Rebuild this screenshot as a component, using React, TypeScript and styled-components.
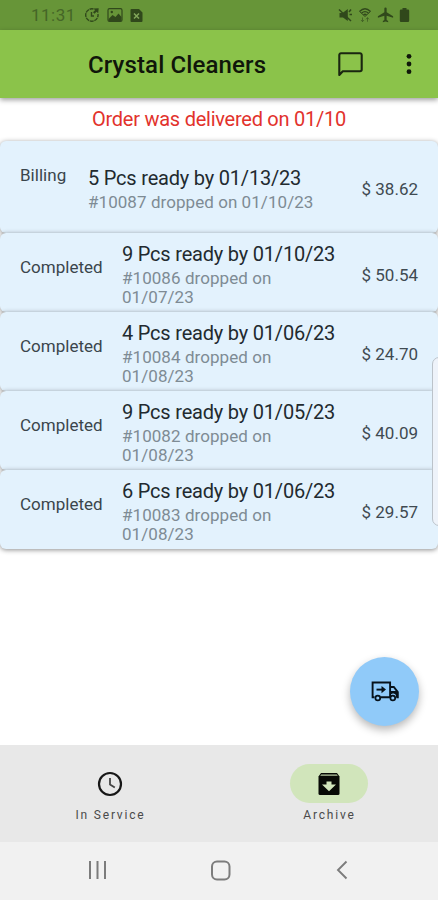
import React from "react";
import styled, { createGlobalStyle } from "styled-components";

const GlobalStyle = createGlobalStyle`
  * { box-sizing: border-box; }
  body { margin: 0; background: #fff; font-family: Roboto, "Liberation Sans", sans-serif; }
`;

const Screen = styled.div`
  position: relative;
  display: flex;
  flex-direction: column;
  width: 438px;
  height: 900px;
  overflow: hidden;
  background: #fff;
`;

const StatusBar = styled.header`
  display: flex;
  align-items: center;
  justify-content: space-between;
  flex: none;
  height: 30px;
  padding: 0 28px 0 31px;
  background: #679538;
  color: #30481b;
`;

const StatusGroup = styled.div<{ $gap: number }>`
  display: flex;
  align-items: center;
  gap: ${(p) => p.$gap}px;
`;

const Clock = styled.span`
  width: 46px;
  font-size: 17px;
  letter-spacing: 0.5px;
  line-height: 20px;
  color: #456627;
`;

const AppBar = styled.div`
  display: flex;
  align-items: center;
  flex: none;
  height: 68px;
  padding: 0 19px 0 88px;
  background: #8bc34a;
  box-shadow: 0 2px 5px rgba(0, 0, 0, 0.38);
  z-index: 1;
`;

const Title = styled.h1`
  flex: 1;
  margin: 1px 0 0;
  font-size: 24px;
  font-weight: 500;
  line-height: 30px;
  letter-spacing: 0.13px;
  white-space: nowrap;
  color: #10160a;
`;

const BarActions = styled.div`
  display: flex;
  align-items: center;
  gap: 36px;
`;

const Notice = styled.p`
  flex: none;
  height: 42px;
  margin: 0;
  text-align: center;
  font-size: 20px;
  line-height: 42px;
  letter-spacing: -0.25px;
  color: #e2322c;
`;

const OrderList = styled.main`
  display: flex;
  flex-direction: column;
  flex: 1;
  padding-top: 1px;
`;

const Card = styled.article<{ $tall?: boolean }>`
  display: flex;
  align-items: flex-start;
  flex: none;
  height: ${(p) => (p.$tall ? 92 : 79)}px;
  padding: ${(p) => (p.$tall ? 24 : 8)}px 20px 0;
  border-radius: 6px;
  background: #e3f2fd;
  box-shadow: 0 1px 5px rgba(0, 0, 0, 0.45);
`;

const OrderState = styled.span<{ $tall?: boolean }>`
  flex: none;
  width: ${(p) => (p.$tall ? 68 : 102)}px;
  margin-top: ${(p) => (p.$tall ? 0 : 16)}px;
  font-size: 17px;
  line-height: 20px;
  letter-spacing: 0.02px;
  color: #3a454c;
`;

const OrderText = styled.div`
  flex: 1;
  min-width: 0;
`;

const Headline = styled.div`
  font-size: 20px;
  line-height: 26px;
  letter-spacing: -0.2px;
  white-space: nowrap;
  color: #222a2f;
`;

const Detail = styled.div<{ $tall?: boolean }>`
  width: ${(p) => (p.$tall ? 240 : 180)}px;
  margin-top: 2px;
  font-size: 17px;
  line-height: 19px;
  letter-spacing: 0.06px;
  color: #7e8b94;
`;

const Price = styled.span<{ $tall?: boolean }>`
  flex: none;
  margin-top: ${(p) => (p.$tall ? 14 : 24)}px;
  font-size: 17px;
  line-height: 20px;
  color: #3f4a51;
`;

const EdgeHandle = styled.div`
  position: absolute;
  top: 357px;
  right: -8px;
  width: 14px;
  height: 169px;
  border: 1px solid #bcc3ca;
  border-radius: 7px;
  background: #eef3fa;
  z-index: 2;
`;

const DeliveryButton = styled.button`
  position: absolute;
  right: 19px;
  bottom: 174px;
  display: flex;
  align-items: center;
  justify-content: center;
  width: 69px;
  height: 69px;
  padding: 0;
  border: 0;
  border-radius: 50%;
  background: #90caf9;
  box-shadow: 0 4px 8px rgba(0, 0, 0, 0.28);
`;

const Tabs = styled.nav`
  display: grid;
  grid-template-columns: 1fr 1fr;
  flex: none;
  height: 97px;
  padding-top: 19px;
  background: #e8e8e8;
`;

const Tab = styled.div`
  display: flex;
  flex-direction: column;
  align-items: center;
`;

const TabPill = styled.div<{ $active?: boolean }>`
  display: flex;
  align-items: center;
  justify-content: center;
  width: 78px;
  height: 39px;
  border-radius: 20px;
  background: ${(p) => (p.$active ? "#d1e5bb" : "transparent")};
`;

const TabLabel = styled.span`
  margin: 4px -2px 0 0;
  font-size: 12px;
  line-height: 16px;
  letter-spacing: 1.8px;
  color: #4a4a4a;
`;

const SystemBar = styled.footer`
  display: flex;
  align-items: center;
  justify-content: space-between;
  flex: none;
  height: 58px;
  padding: 0 88px 2px 88px;
  background: #f1f1f1;
`;

type Order = { state: string; pcs: number; ready: string; id: string; dropped: string; price: string; tall?: boolean };

const orders: Order[] = [
  { state: "Billing", pcs: 5, ready: "01/13/23", id: "10087", dropped: "01/10/23", price: "38.62", tall: true },
  { state: "Completed", pcs: 9, ready: "01/10/23", id: "10086", dropped: "01/07/23", price: "50.54" },
  { state: "Completed", pcs: 4, ready: "01/06/23", id: "10084", dropped: "01/08/23", price: "24.70" },
  { state: "Completed", pcs: 9, ready: "01/05/23", id: "10082", dropped: "01/08/23", price: "40.09" },
  { state: "Completed", pcs: 6, ready: "01/06/23", id: "10083", dropped: "01/08/23", price: "29.57" },
];

const TimerIcon = () => (
  <svg width="16" height="16" viewBox="0 0 16 16" fill="none" stroke="currentColor" strokeWidth="1.4">
    <path d="M9.500 2A6.200 6.200 0 1 0 14 7" strokeDasharray="4 0.7" />
    <path d="M7.500 5v4H10" />
    <path d="M9 5.200l2-2-1.300-1.700 5-.3-.5 5-1.700-1.500-2 2z" fill="currentColor" stroke="none" />
  </svg>
);

const ImageIcon = () => (
  <svg width="16" height="16" viewBox="0 0 16 16">
    <rect x="1" y="1.7" width="14" height="12.8" rx="1.5" fill="none" stroke="currentColor" strokeWidth="1.2" />
    <path d="M1.5 12l4-4 3 2 3-3.5 3 3.5v4h-13z" fill="currentColor" />
    <circle cx="4.8" cy="5" r="1.2" fill="currentColor" />
  </svg>
);

const FileIcon = () => (
  <svg width="13" height="15" viewBox="0 0 13 15">
    <path d="M1.5 1H9l3.5 3.5V13a1 1 0 0 1-1 1h-10a1 1 0 0 1-1-1V2a1 1 0 0 1 1-1z" fill="currentColor" />
    <path d="M4 5.5l5 5m0-5l-5 5" stroke="#82a75b" strokeWidth="1.5" />
  </svg>
);

const MuteIcon = () => (
  <svg width="15" height="16" viewBox="0 0 15 16" fill="currentColor">
    <path d="M1.5 6h3L9.8 2v12L5 10.500H1.500z" />
    <path d="M1 2.500l12 11.500M11 5l2-2.500M11.500 7.500h2.500" stroke="currentColor" strokeWidth="1.500" />
  </svg>
);

const WifiIcon = () => (
  <svg width="14" height="16" viewBox="0 0 14 16" fill="none" stroke="currentColor" strokeWidth="1.300">
    <path d="M1.500 4.500Q7-1 12.500 4.500M3.500 6.300Q7 3 10.500 6.300M5.500 8Q7 6.500 8.500 8" />
    <path d="M1.500 4.500L7 9.500l5.500-5" strokeWidth="0.900" />
    <path d="M4.500 10.500v4M3 13l1.500 1.700L6 13M9.500 14.700v-4M8 12.300l1.500-1.700 1.500 1.700" strokeWidth="0.900" opacity="0.650" />
  </svg>
);

const PlaneIcon = () => (
  <svg width="17" height="16" viewBox="2 1.500 20 21" fill="currentColor">
    <path d="M22 15.500v-2l-8.500-5V3.500a1.500 1.500 0 0 0-3 0v5L2 13.500v2l8.500-2.500v5.500L8.500 20v1.500l3.500-1 3.500 1V20l-2-1.500V13z" />
  </svg>
);

const BatteryIcon = () => (
  <svg width="11" height="16" viewBox="0 0 11 16" fill="currentColor">
    <path d="M3.500 1h4v1.500H9a1.200 1.200 0 0 1 1.200 1.200v10A1.300 1.300 0 0 1 9 15H2a1.300 1.300 0 0 1-1.200-1.300v-10A1.200 1.200 0 0 1 2 2.500h1.500z" />
  </svg>
);

const ChatIcon = () => (
  <svg width="25" height="25" viewBox="0 0 25 25" fill="none" stroke="#1a2610" strokeWidth="2.100" strokeLinejoin="round">
    <path d="M1.300 23V3A1.700 1.700 0 0 1 3 1.300h19A1.700 1.700 0 0 1 23.700 3v14.500a1.700 1.700 0 0 1-1.700 1.700H4.800z" />
  </svg>
);

const MoreIcon = () => (
  <svg width="20" height="22" viewBox="0 0 20 22" fill="#10180a">
    <circle cx="10" cy="3.300" r="2.400" />
    <circle cx="10" cy="11" r="2.400" />
    <circle cx="10" cy="18.700" r="2.400" />
  </svg>
);

const TruckIcon = () => (
  <svg width="28" height="21" viewBox="0 0 28 21" fill="none" stroke="#07121b" strokeWidth="1.900">
    <path d="M3.500 16.200H1.600V1.500h17.500v14.700H9.500M19 6h3.800l4 5.100v5.100h-1.500M15 16.200h5" />
    <path d="M19 10h6.500l1.500 1.500v4.700h-2A3 3 0 0 0 19 15z" fill="#07121b" stroke="none" />
    <path d="M5.500 8.600h6" />
    <path d="M10.500 4.900l4.500 3.700-4.500 3.700z" fill="#07121b" stroke="none" />
    <circle cx="6.800" cy="17" r="2.400" fill="#90caf9" strokeWidth="1.700" />
    <circle cx="21.800" cy="17" r="2.400" fill="#90caf9" strokeWidth="1.700" />
  </svg>
);

const ServiceIcon = () => (
  <svg width="26" height="26" viewBox="0 0 26 26" fill="none" stroke="#171717">
    <circle cx="13" cy="13" r="11" strokeWidth="2.200" />
    <path d="M13 7v6.500l4.800 3" strokeWidth="1.800" stroke="#444" />
  </svg>
);

const ArchiveIcon = () => (
  <svg width="22" height="24" viewBox="0 0 22 24">
    <path d="M3 1h16l2.500 3.500v17A1.500 1.500 0 0 1 20 23H2a1.500 1.500 0 0 1-1.500-1.500v-17z" fill="#080a06" />
    <path d="M3.200 2.500h15.600l1 1.300H2.200z" fill="#b7c9a3" />
    <path d="M8.500 9.500h5v3H18l-7 6.800-7-6.800h4.500z" fill="#d1e5bb" />
  </svg>
);

const RecentsIcon = () => (
  <svg width="19" height="20" viewBox="0 0 19 20" stroke="#7c7c7c" strokeWidth="2">
    <path d="M2 1v18M9.500 1v18M17 1v18" />
  </svg>
);

const HomeIcon = () => (
  <svg width="21" height="21" viewBox="0 0 21 21" fill="none" stroke="#7c7c7c" strokeWidth="2">
    <rect x="0.500" y="1.500" width="17.500" height="18" rx="5" transform="translate(.5 0)" />
  </svg>
);

const BackIcon = () => (
  <svg width="15" height="20" viewBox="0 0 15 20" fill="none" stroke="#7c7c7c" strokeWidth="1.900">
    <path d="M11.500 1.500L3 10l8.500 8.500" />
  </svg>
);

export default function App() {
  return (
    <>
      <GlobalStyle />
      <Screen>
        <StatusBar>
          <StatusGroup $gap={7}>
            <Clock>11:31</Clock>
            <TimerIcon />
            <ImageIcon />
            <FileIcon />
          </StatusGroup>
          <StatusGroup $gap={5}>
            <MuteIcon />
            <WifiIcon />
            <PlaneIcon />
            <BatteryIcon />
          </StatusGroup>
        </StatusBar>
        <AppBar>
          <Title>Crystal Cleaners</Title>
          <BarActions>
            <ChatIcon />
            <MoreIcon />
          </BarActions>
        </AppBar>
        <Notice>Order was delivered on 01/10</Notice>
        <OrderList>
          {orders.map((o) => (
            <Card key={o.id} $tall={o.tall}>
              <OrderState $tall={o.tall}>{o.state}</OrderState>
              <OrderText>
                <Headline>{`${o.pcs} Pcs ready by ${o.ready}`}</Headline>
                <Detail $tall={o.tall}>{`#${o.id} dropped on ${o.dropped}`}</Detail>
              </OrderText>
              <Price $tall={o.tall}>{`$ ${o.price}`}</Price>
            </Card>
          ))}
        </OrderList>
        <Tabs>
          <Tab>
            <TabPill>
              <ServiceIcon />
            </TabPill>
            <TabLabel>In Service</TabLabel>
          </Tab>
          <Tab>
            <TabPill $active>
              <ArchiveIcon />
            </TabPill>
            <TabLabel>Archive</TabLabel>
          </Tab>
        </Tabs>
        <SystemBar>
          <RecentsIcon />
          <HomeIcon />
          <BackIcon />
        </SystemBar>
        <DeliveryButton aria-label="Delivery">
          <TruckIcon />
        </DeliveryButton>
        <EdgeHandle />
      </Screen>
    </>
  );
}
